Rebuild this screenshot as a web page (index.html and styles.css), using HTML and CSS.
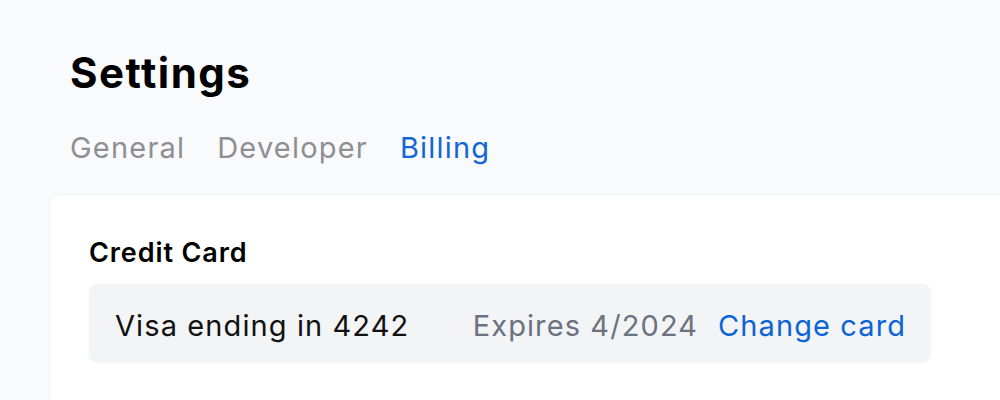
FILE: index.html
```html
<!DOCTYPE html>
<html>
<head>
<meta charset="utf-8">
<link rel="stylesheet" href="styles.css">
</head>
<body>
<div class="page">
  <h1 class="title">Settings</h1>
  <nav class="tabs">
    <span class="tab">General</span>
    <span class="tab">Developer</span>
    <span class="tab active">Billing</span>
  </nav>
  <section class="card">
    <h2 class="card-title">Credit Card</h2>
    <div class="cc-row">
      <span class="cc-name">Visa ending in 4242</span>
      <span class="cc-exp">Expires 4/2024</span>
      <span class="cc-change">Change card</span>
    </div>
  </section>
</div>
</body>
</html>
```
FILE: styles.css
```css
html, body {
  margin: 0;
  padding: 0;
  background: #f9fafb;
  font-family: Inter, "Noto Sans", sans-serif;
  overflow: hidden;
  height: 400px;
}
.page {
  padding: 47px 0 0 50px;
  height: 400px;
  box-sizing: border-box;
}
.title {
  margin: 0 0 0 20px;
  font-size: 42px;
  font-weight: 700;
  color: #000;
  line-height: 52px;
  letter-spacing: 1.5px;
}
.tabs {
  display: flex;
  gap: 32px;
  margin: 29px 0 0 20px;
  font-size: 29px;
  line-height: 40px;
  letter-spacing: 1.2px;
}
.tab {
  color: #8e8e93;
}
.tab.active {
  color: #1366d6;
}
.card {
  margin-top: 27px;
  background: #fff;
  border-radius: 10px 0 0 0;
  box-shadow: 0 0 3px rgba(0,0,0,0.06);
  padding: 40px 70px 0 39px;
  height: 240px;
}
.card-title {
  margin: 0;
  font-size: 27px;
  font-weight: 600;
  line-height: 36px;
  color: #000;
  letter-spacing: 0.9px;
}
.cc-row {
  margin-top: 13px;
  display: flex;
  align-items: center;
  background: #f3f4f6;
  border-radius: 8px;
  height: 78px;
  padding: 5px 26px 0 26px;
  font-size: 29px;
  letter-spacing: 1.1px;
  width: 842px;
  box-sizing: border-box;
  box-shadow: 0 1px 2px rgba(0,0,0,0.04);
}
.cc-name {
  color: #111;
  flex: 1;
}
.cc-exp {
  color: #6b7280;
  margin-right: 20px;
}
.cc-change {
  color: #0b63d6;
  margin-right: -1.1px;
}
```
